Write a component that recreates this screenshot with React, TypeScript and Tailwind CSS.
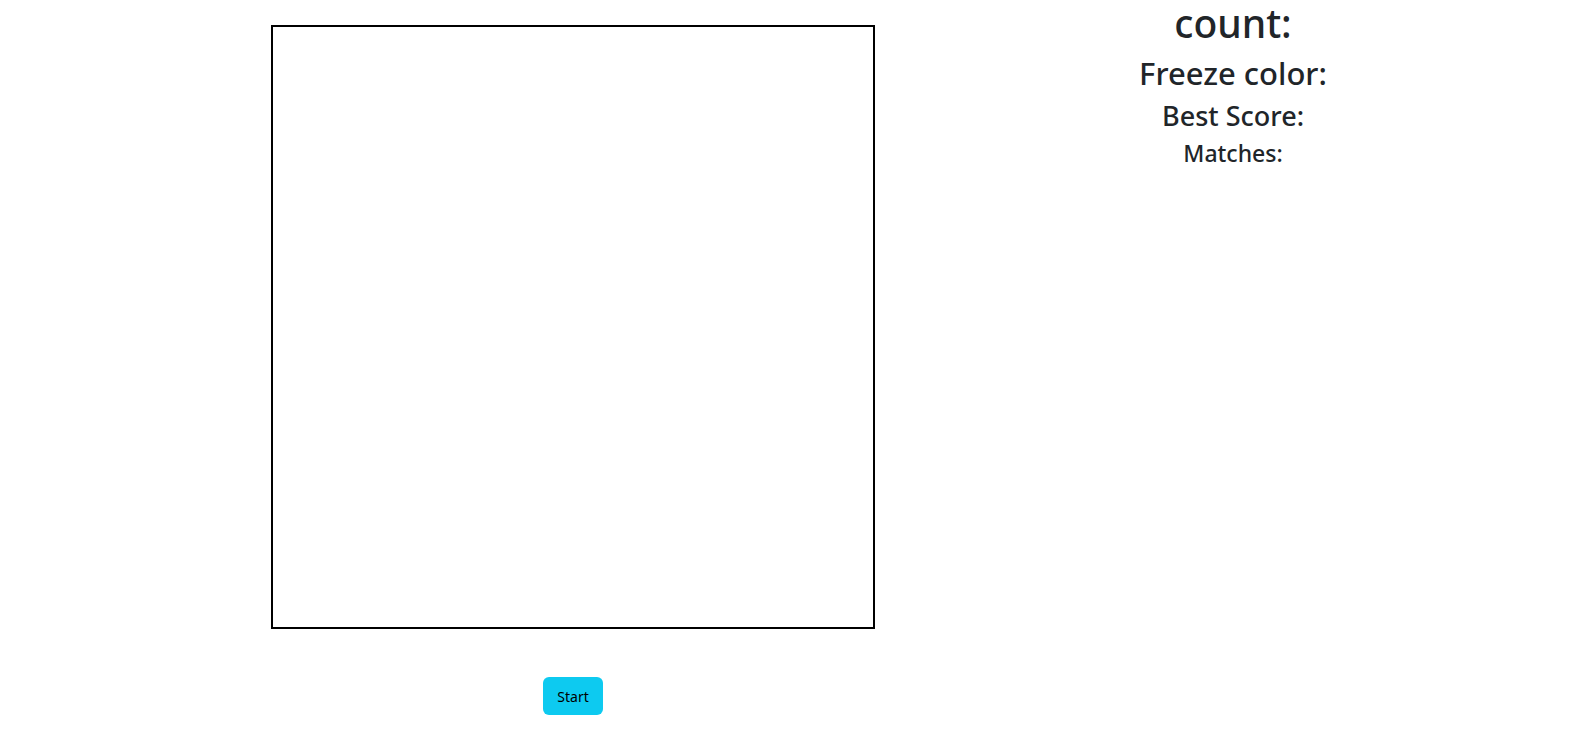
export default function App() {
  return (
    <main className="flex min-h-screen bg-white pl-[243px] font-['Noto_Sans',sans-serif] text-[#212529]">
      {/* Board + start */}
      <div className="flex w-[660px] flex-col items-center pt-[25px]">
        <div className="h-[604px] w-[604px] border-2 border-black bg-white" />
        <button className="mt-[48px] h-[38px] rounded-md bg-[#0dcaf0] px-[14px] text-[14px] text-black">
          Start
        </button>
      </div>

      {/* Stats */}
      <div className="flex w-[660px] flex-col items-center leading-[1.2]">
        <h1 className="mb-2 text-[39px] font-medium">count:</h1>
        <h2 className="mb-2 text-[31px] font-medium">Freeze color:</h2>
        <h3 className="mb-2 text-[27px] font-medium">Best Score:</h3>
        <h4 className="mb-2 text-[23px] font-medium">Matches:</h4>
      </div>
    </main>
  );
}
